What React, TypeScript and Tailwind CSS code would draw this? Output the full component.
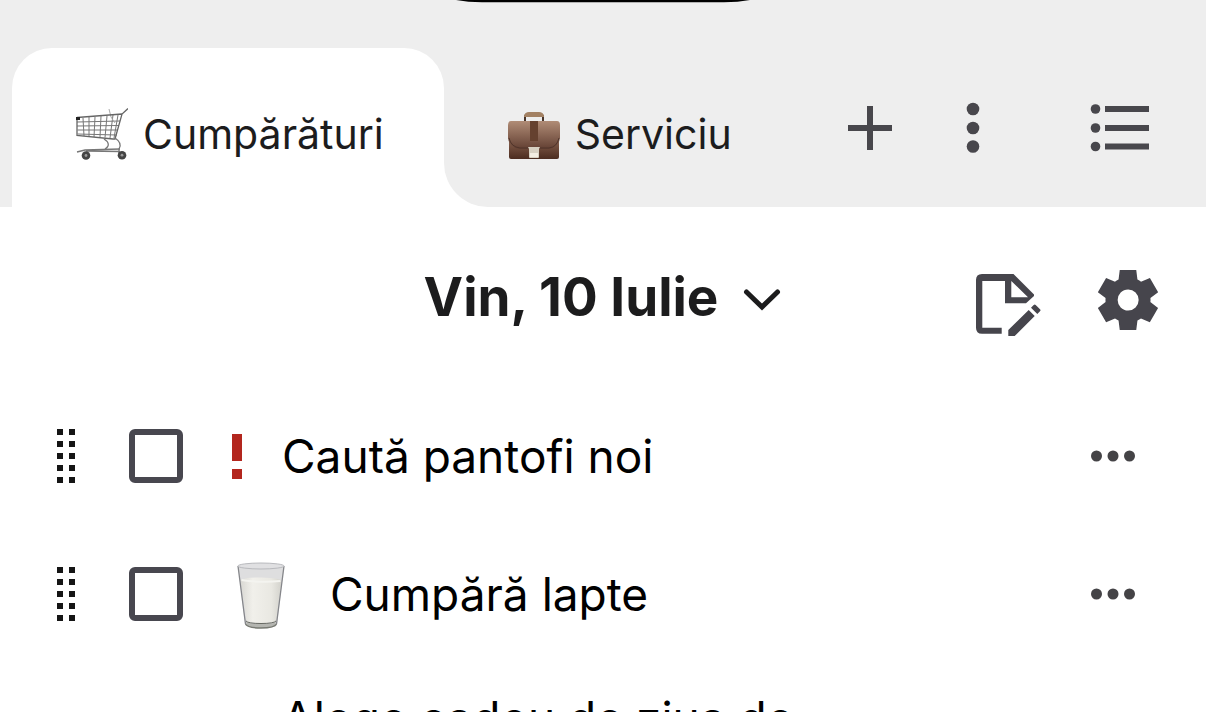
import { useState } from "react";

type Task = { id: string; text: string; icon: "important" | "milk"; lines?: number };

const TASKS: Task[] = [
    { id: "pantofi", text: "Caută pantofi noi", icon: "important" },
    { id: "lapte", text: "Cumpără lapte", icon: "milk" },
    { id: "cadou", text: "Alege cadou de ziua de", icon: "important", lines: 2 },
];

/* ── Pictograms ── */

function CartIcon() {
    return (
        <svg viewBox="0 0 52 52" className="w-[52px] h-[52px] shrink-0" fill="none" aria-hidden="true">
            <g stroke="#777" strokeWidth="1">
                <path d="M1 14l43-1M1 18l42-.5M1.500 22l40.500 0M1.500 26l39.500 1" />
                <path d="M7 10l1 18M13 9l0 20M19 9l-1 20M25 8l-1 21M31 8l-2 21.500M37 7l-3 23M42 7l-4 23" />
                <path d="M33 1l2 8 4 6" stroke="#aaa" />
            </g>
            <path d="M1 9.500L46 6M1 9v18.500l36 3.500h2L46 6l6-5.500" stroke="#666" strokeWidth="1.300" />
            <path d="M28 31c5 3 6 7 1 10M39 30c6 4 6 8 4 11v5" stroke="#777" strokeWidth="1.300" />
            <path d="M1 44l8-2 35-1M10 43l34 .5" stroke="#777" strokeWidth="1.300" />
            <rect x="0" y="9" width="4" height="3" fill="#222" />
            <circle cx="10" cy="47.500" r="4.300" fill="#444" />
            <circle cx="10" cy="47.500" r="1.400" fill="#999" />
            <circle cx="46" cy="47.200" r="4.300" fill="#444" />
            <circle cx="46" cy="47.200" r="1.400" fill="#999" />
        </svg>
    );
}

function BriefcaseIcon() {
    return (
        <svg viewBox="0 0 52 52" className="w-[52px] h-[52px] shrink-0" fill="none" aria-hidden="true">
            <defs>
                <linearGradient id="leather" x1="0" y1="0" x2="0" y2="1">
                    <stop offset="0" stopColor="#a98570" />
                    <stop offset=".45" stopColor="#785342" />
                    <stop offset="1" stopColor="#4b2c20" />
                </linearGradient>
                <linearGradient id="flap" x1="0" y1="0" x2="0" y2="1">
                    <stop offset="0" stopColor="#b08c76" />
                    <stop offset="1" stopColor="#634033" />
                </linearGradient>
            </defs>
            <path d="M17 13V9q0-3 4-3h10q4 0 4 3v4" stroke="#463329" strokeWidth="2" />
            <path d="M16 8q1-4 5-4h10q4 0 5 4v1H16z" fill="#a38163" />
            <path d="M1 25h50v24q0 2-2 2H3q-2 0-2-2z" fill="url(#leather)" />
            <path d="M3 13h46q3 0 3 4v13q-1 9-11 11H11Q1 39 0 30V17q0-4 3-4z" fill="url(#flap)" />
            <path d="M1 30q2 9 11 10h29q8-1 10-10" stroke="#50342a" strokeWidth="1" />
            <path d="M22 13h8v20h-8z" fill="#65412f" />
            <path d="M20 39h12l-1 2v8q0 1-1 1h-8q-1 0-1-1v-8z" fill="#d8d1c3" />
            <path d="M22 45h8v4h-8z" fill="#f3eee3" />
        </svg>
    );
}

function MilkIcon() {
    return (
        <svg viewBox="0 -2 68 68" className="w-[68px] h-[68px] shrink-0 overflow-visible" fill="none" aria-hidden="true">
            <defs>
                <linearGradient id="milk" x1="0" y1="0" x2="1" y2="0">
                    <stop offset="0" stopColor="#d9d8d3" />
                    <stop offset=".3" stopColor="#f1f0eb" />
                    <stop offset=".75" stopColor="#e9e8e2" />
                    <stop offset="1" stopColor="#d3d2cc" />
                </linearGradient>
            </defs>
            <path d="M11 4l7 58q0 4 16 4t16-4l7-58z" fill="#dededf" />
            <path d="M13.500 18q3-3 21-2.500t20 3L49 59q-1 2-15 2t-14.500-2z" fill="url(#milk)" />
            <path d="M14.500 18q19 3 39 1" stroke="#f4f4f0" strokeWidth="2" />
            <path d="M19 59q0 3 15 3t15-3l-.5 3q0 4-14.500 4t-14.500-4z" fill="#b4b5b0" />
            <path d="M19 59q2 2.500 15 2.500T49 59" stroke="#666862" strokeWidth="1" />
            <path d="M18.500 62q2 4 15.500 4t15.500-4" stroke="#777972" strokeWidth="1.500" />
            <path d="M11 4l7.500 58M57 4l-7.500 58" stroke="#85868a" strokeWidth="1.300" />
            <ellipse cx="34" cy="4" rx="23" ry="3" fill="#e0e0e2" stroke="#b8b9bd" />
        </svg>
    );
}

function ImportantIcon() {
    return (
        <svg viewBox="0 0 20 54" className="w-5 h-[54px] shrink-0" fill="#b3261e" aria-hidden="true">
            <path d="M5 5h10v27H5zM5 40h10v10H5z" />
        </svg>
    );
}

/* ── Toolbar icons ── */

function PlusIcon() {
    return (
        <svg viewBox="0 0 72 72" className="w-18 h-18" fill="none" stroke="#48474c" strokeWidth="6" aria-hidden="true">
            <path d="M14 36h44M36 14v44" />
        </svg>
    );
}

function MoreVerticalIcon() {
    return (
        <svg viewBox="0 0 72 72" className="w-18 h-18" fill="#48474c" aria-hidden="true">
            <circle cx="36" cy="17" r="6.300" />
            <circle cx="36" cy="36" r="6.300" />
            <circle cx="36" cy="54.500" r="6.300" />
        </svg>
    );
}

function ListIcon() {
    return (
        <svg viewBox="0 0 72 72" className="w-18 h-18" fill="#48474c" aria-hidden="true">
            <path d="M21 14h44v6H21zM21 33h44v6H21zM21 51.500h44v6H21z" />
            <circle cx="11.500" cy="17" r="4.800" />
            <circle cx="11.500" cy="36" r="4.800" />
            <circle cx="11.500" cy="54.500" r="4.800" />
        </svg>
    );
}

function NoteEditIcon() {
    return (
        <svg viewBox="0 -6 72 72" className="w-18 h-18 overflow-visible" fill="#46454c" aria-hidden="true">
            <path
                fillRule="evenodd"
                d="M10 7h31.500L62 27.500v1.500L54 36.300H33V14H10.300v46.700H29.700v6H10q-6 0-6-6V13q0-6 6-6zM39.300 14v16.300H56z"
            />
            <path d="M36.300 63L56.700 43l6 6-20 20h-6.400zM59 40.700l2.700-2.700q1-1 2 0l4.300 4.300q1 1 0 2l-2.700 2.700z" />
        </svg>
    );
}

function GearIcon() {
    return (
        <svg viewBox="0 -1 24 24" className="w-18 h-18" fill="#46454c" aria-hidden="true">
            <path d="m9.250 22-.4-3.200q-.325-.125-.612-.3t-.563-.375L4.700 19.375l-2.750-4.750 2.575-1.950Q4.500 12.500 4.500 12.338v-.675q0-.163.025-.338L1.950 9.375l2.750-4.750 2.975 1.250q.275-.2.575-.375t.6-.3l.4-3.200h5.500l.4 3.200q.325.125.613.3t.562.375l2.975-1.250 2.750 4.750-2.575 1.950q.025.175.025.338v.674q0 .163-.05.338l2.575 1.950-2.750 4.750-2.950-1.250q-.275.2-.575.375t-.6.3l-.4 3.200zm2.800-6.500q1.450 0 2.475-1.025T15.550 12t-1.025-2.475T12.050 8.500q-1.475 0-2.488 1.025T8.550 12t1.013 2.475T12.050 15.500" />
        </svg>
    );
}

function DragHandle() {
    return (
        <svg viewBox="0 0 18 54" className="w-[18px] h-[54px] shrink-0" fill="#151515" aria-hidden="true">
            {[0, 12, 24, 36, 48].map(y => (
                <path key={y} d={`M0 ${y}h6v6H0zM12 ${y}h6v6h-6z`} />
            ))}
        </svg>
    );
}

function TaskRow({ task, done, onToggle }: { task: Task; done: boolean; onToggle: () => void }) {
    return (
        <li className="flex items-center min-h-[138px] py-[26px] pl-[57px] pr-[63px]">
            <DragHandle />
            <input
                id={task.id}
                type="checkbox"
                checked={done}
                onChange={onToggle}
                className="appearance-none shrink-0 w-[54px] h-[54px] ml-[54px] mr-11 border-6 border-[#48474f] rounded-md checked:bg-[#48474f]"
            />
            {task.icon === "milk" ? <MilkIcon /> : <ImportantIcon />}
            <label
                htmlFor={task.id}
                className={`flex-1 ml-[35px] text-[46px] leading-[58px] text-black ${task.lines === 2 ? "min-h-[116px]" : ""}`}
            >
                {task.text}
            </label>
            <button type="button" aria-label="Opțiuni" className="shrink-0">
                <svg viewBox="0 0 60 60" className="w-15 h-15" fill="#444346" aria-hidden="true">
                    <circle cx="13.500" cy="30" r="5.500" />
                    <circle cx="30" cy="30" r="5.500" />
                    <circle cx="46.500" cy="30" r="5.500" />
                </svg>
            </button>
        </li>
    );
}

export default function App() {
    const [done, setDone] = useState<string[]>([]);

    const toggle = (id: string) =>
        setDone(prev => (prev.includes(id) ? prev.filter(d => d !== id) : [...prev, id]));

    return (
        <div className="relative h-screen overflow-hidden bg-white font-['Inter','Liberation_Sans',sans-serif] text-[#1c1c1d]">
            {/* Camera cutout */}
            <svg viewBox="0 0 306 3" className="absolute top-0 left-1/2 -translate-x-1/2 w-[306px] h-[3px]" aria-hidden="true">
                <path d="M6 0h294Q288 2.300 274 2.300H32Q18 2.300 6 0z" fill="#000" />
            </svg>

            {/* Tabs */}
            <header className="flex bg-[#eeeeee] pt-12 pl-3 pr-[50px]">
                <nav className="flex text-[41px] leading-[52px]">
                    <button type="button" className="relative flex items-center gap-[15px] h-[159px] pl-16 pr-15 pt-3 bg-white rounded-t-[40px]">
                        <CartIcon />
                        Cumpărături
                        <span className="absolute left-full bottom-0 w-11 h-11 bg-white">
                            <span className="block w-full h-full bg-[#eeeeee] rounded-bl-[44px]" />
                        </span>
                    </button>
                    <button type="button" className="flex items-center gap-[15px] h-[159px] pl-16 pt-3">
                        <BriefcaseIcon />
                        Serviciu
                    </button>
                </nav>
                <div className="flex items-center ml-auto">
                    <button type="button" aria-label="Adaugă listă"><PlusIcon /></button>
                    <button type="button" aria-label="Mai multe" className="ml-[31px]"><MoreVerticalIcon /></button>
                    <button type="button" aria-label="Toate listele" className="ml-[75px]"><ListIcon /></button>
                </div>
            </header>

            {/* Date */}
            <div className="grid grid-cols-[1fr_auto_1fr] items-center h-[180px] px-[42px]">
                <button type="button" className="col-start-2 flex items-center gap-6">
                    <span className="text-[53px] leading-[64px] font-bold">Vin, 10 Iulie</span>
                    <svg viewBox="0 0 40 40" className="w-10 h-10" fill="none" stroke="#1c1c1d" strokeWidth="5" strokeLinecap="round" aria-hidden="true">
                        <path d="M4.500 15L20 30l15.500-15" />
                    </svg>
                </button>
                <div className="flex justify-end gap-12">
                    <button type="button" aria-label="Editează nota"><NoteEditIcon /></button>
                    <button type="button" aria-label="Setări"><GearIcon /></button>
                </div>
            </div>

            {/* Tasks */}
            <ul>
                {TASKS.map(task => (
                    <TaskRow key={task.id} task={task} done={done.includes(task.id)} onToggle={() => toggle(task.id)} />
                ))}
            </ul>
        </div>
    );
}
